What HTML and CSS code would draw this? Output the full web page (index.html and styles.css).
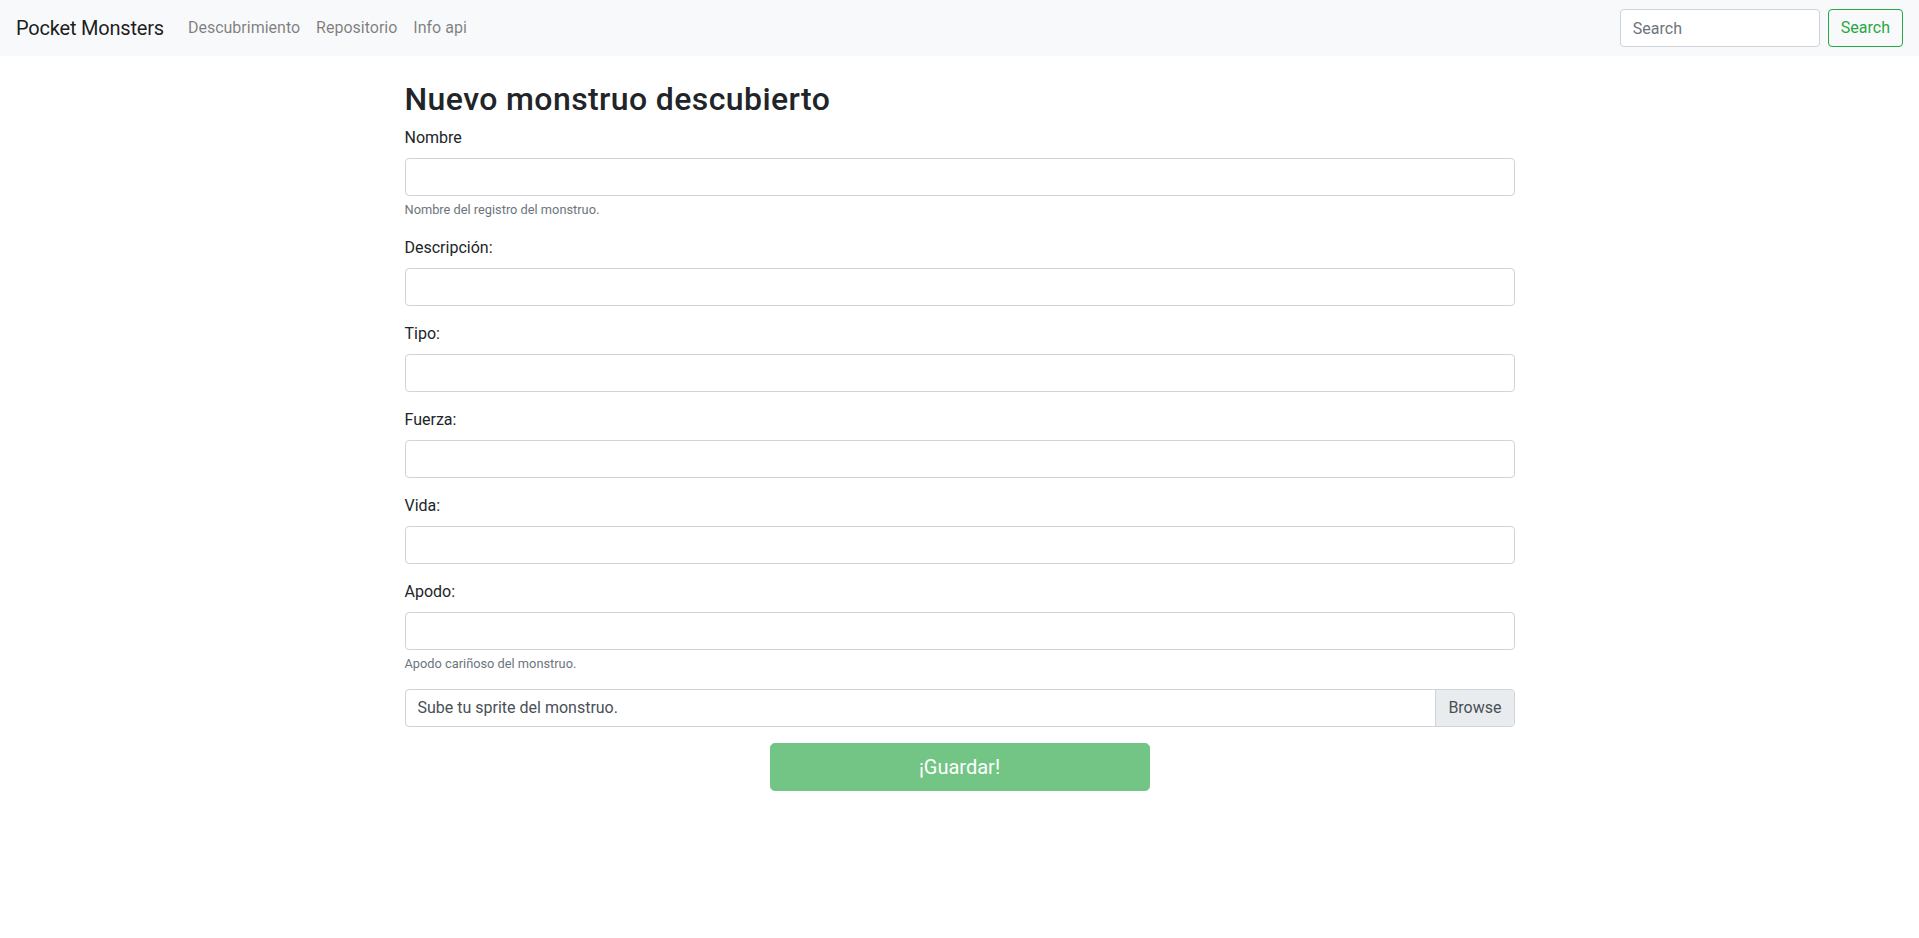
FILE: index.html
```html
<!DOCTYPE html>
<html lang="es">
<head>
<meta charset="utf-8">
<title>Pocket Monsters</title>
<link rel="stylesheet" href="styles.css">
</head>
<body>
<nav class="navbar">
  <a class="brand" href="#">Pocket Monsters</a>
  <ul class="nav-links">
    <li><a class="nav-link" href="#">Descubrimiento</a></li>
    <li><a class="nav-link" href="#">Repositorio</a></li>
    <li><a class="nav-link" href="#">Info api</a></li>
  </ul>
  <form class="search">
    <input class="search-input" type="search" placeholder="Search">
    <button class="search-btn" type="button">Search</button>
  </form>
</nav>
<main class="container">
  <h2 class="title">Nuevo monstruo descubierto</h2>
  <form>
    <div class="form-group">
      <label class="label">Nombre</label>
      <input class="form-control" type="text">
      <small class="form-text">Nombre del registro del monstruo.</small>
    </div>
    <div class="form-group">
      <label class="label">Descripción:</label>
      <input class="form-control" type="text">
    </div>
    <div class="form-group">
      <label class="label">Tipo:</label>
      <input class="form-control" type="text">
    </div>
    <div class="form-group">
      <label class="label">Fuerza:</label>
      <input class="form-control" type="text">
    </div>
    <div class="form-group">
      <label class="label">Vida:</label>
      <input class="form-control" type="text">
    </div>
    <div class="form-group">
      <label class="label">Apodo:</label>
      <input class="form-control" type="text">
      <small class="form-text">Apodo cariñoso del monstruo.</small>
    </div>
    <div class="form-group">
      <div class="custom-file">
        <span class="file-label">Sube tu sprite del monstruo.</span>
        <span class="file-browse">Browse</span>
      </div>
    </div>
    <div class="submit-row">
      <button class="btn-save" type="button" disabled>¡Guardar!</button>
    </div>
  </form>
</main>
</body>
</html>
```
FILE: styles.css
```css
* { box-sizing: border-box; }
body {
  margin: 0;
  font-family: Roboto, "Liberation Sans", sans-serif;
  font-size: 16px;
  line-height: 1.5;
  color: #212529;
  background: #fff;
}
a { text-decoration: none; }

.navbar {
  display: flex;
  align-items: center;
  padding: 8px 16px;
  background: #f8f9fa;
}
.brand {
  font-size: 20px;
  line-height: 30px;
  padding: 5px 0;
  margin-right: 16px;
  color: rgba(0,0,0,.9);
  letter-spacing: -0.2px;
}
.nav-links {
  display: flex;
  list-style: none;
  margin: 0;
  padding: 0;
}
.nav-link {
  display: block;
  padding: 8px;
  color: rgba(0,0,0,.5);
}
.search {
  margin: 0 0 0 auto;
  display: flex;
  align-items: center;
}
.search-input {
  width: 200px;
  height: 38px;
  margin-right: 8px;
  padding: 6px 12px;
  font: inherit;
  color: #495057;
  border: 1px solid #ced4da;
  border-radius: 4px;
  background: #fff;
}
.search-input::placeholder { color: #6c757d; }
.search-btn {
  height: 38px;
  padding: 6px 12px;
  font: inherit;
  color: #28a745;
  background: transparent;
  border: 1px solid #28a745;
  border-radius: 4px;
}

.container {
  width: 1110px;
  margin: 24px auto 0;
}
.title {
  font-size: 32px;
  font-weight: 500;
  line-height: 1.2;
  margin: 0 0 8px;
  letter-spacing: 0.4px;
}
.form-group {
  margin-bottom: 16px;
}
.label {
  display: block;
  margin-bottom: 8px;
}
.form-control {
  display: block;
  width: 100%;
  height: 38px;
  padding: 6px 12px;
  font: inherit;
  color: #495057;
  border: 1px solid #ced4da;
  border-radius: 4px;
  background: #fff;
}
.form-text {
  display: block;
  margin-top: 4px;
  font-size: 12.8px;
  line-height: 1.5;
  color: #6c757d;
}
.custom-file {
  display: flex;
  height: 38px;
  border: 1px solid #ced4da;
  border-radius: 4px;
  overflow: hidden;
  color: #495057;
}
.file-label {
  flex: 1;
  padding: 6px 12px;
  line-height: 24px;
}
.file-browse {
  padding: 6px 12px;
  line-height: 24px;
  background: #e9ecef;
  border-left: 1px solid #ced4da;
}
.submit-row {
  display: flex;
  justify-content: center;
}
.btn-save {
  width: 380px;
  height: 48px;
  padding: 8px 16px;
  font: inherit;
  font-size: 20px;
  line-height: 1.5;
  color: #fff;
  background: #28a745;
  border: 1px solid #28a745;
  border-radius: 4.8px;
  opacity: .65;
}
```
